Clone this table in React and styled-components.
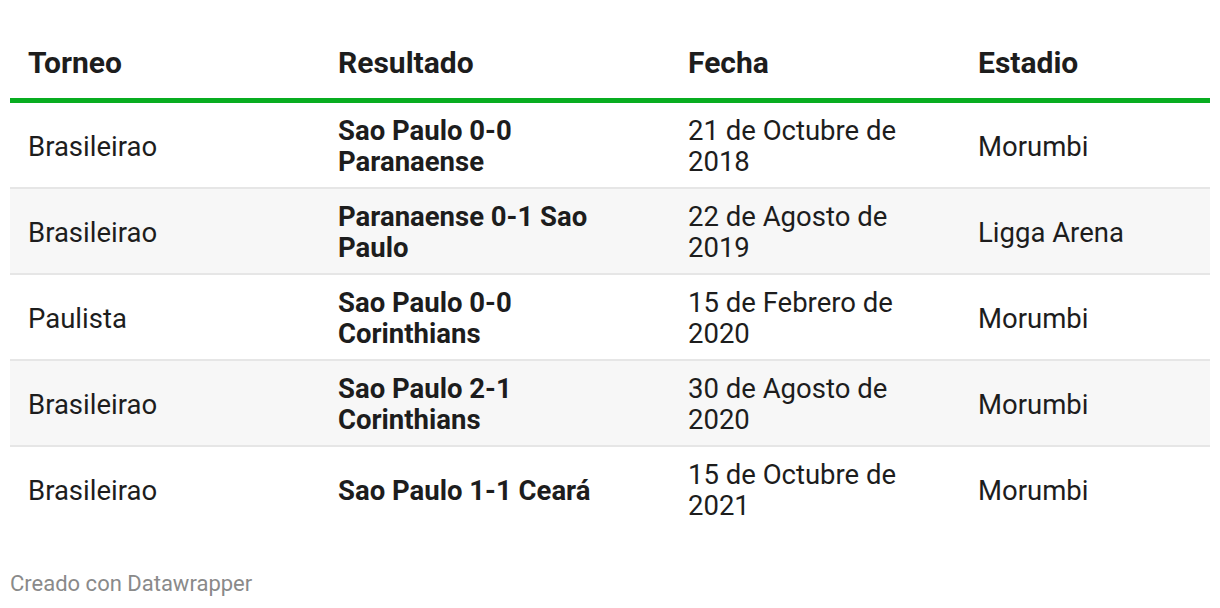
import React from "react";
import styled, { createGlobalStyle } from "styled-components";

const GlobalStyle = createGlobalStyle`
  html, body {
    margin: 0;
    padding: 0;
    background: #ffffff;
  }
  body {
    font-family: Roboto, "Liberation Sans", sans-serif;
    color: #1d1d1d;
  }
`;

const rows = [
  {
    torneo: "Brasileirao",
    resultado: "Sao Paulo 0-0 Paranaense",
    fecha: "21 de Octubre de 2018",
    estadio: "Morumbi",
  },
  {
    torneo: "Brasileirao",
    resultado: "Paranaense 0-1 Sao Paulo",
    fecha: "22 de Agosto de 2019",
    estadio: "Ligga Arena",
  },
  {
    torneo: "Paulista",
    resultado: "Sao Paulo 0-0 Corinthians",
    fecha: "15 de Febrero de 2020",
    estadio: "Morumbi",
  },
  {
    torneo: "Brasileirao",
    resultado: "Sao Paulo 2-1 Corinthians",
    fecha: "30 de Agosto de 2020",
    estadio: "Morumbi",
  },
  {
    torneo: "Brasileirao",
    resultado: "Sao Paulo 1-1 Ceará",
    fecha: "15 de Octubre de 2021",
    estadio: "Morumbi",
  },
];

export default function App() {
  return (
    <>
      <GlobalStyle />
      <Page>
        <Table>
          <HeaderRow>
            <HeadCell>Torneo</HeadCell>
            <HeadCell>Resultado</HeadCell>
            <HeadCell>Fecha</HeadCell>
            <HeadCell>Estadio</HeadCell>
          </HeaderRow>
          {rows.map((row, index) => (
            <Row key={index} $striped={index % 2 === 1} $last={index === rows.length - 1}>
              <Cell>{row.torneo}</Cell>
              <Cell $bold>{row.resultado}</Cell>
              <Cell>{row.fecha}</Cell>
              <Cell>{row.estadio}</Cell>
            </Row>
          ))}
        </Table>
        <Footer>Creado con Datawrapper</Footer>
      </Page>
    </>
  );
}

const Page = styled.div`
  padding: 44px 10px 0;
  display: flex;
  flex-direction: column;
`;

const Table = styled.div`
  display: flex;
  flex-direction: column;
`;

const columns = `310px 350px 290px 250px`;

const HeaderRow = styled.div`
  display: grid;
  grid-template-columns: ${columns};
  border-bottom: 5px solid #08ad20;
  padding-bottom: 16px;
`;

const HeadCell = styled.div`
  padding: 0 18px;
  font-size: 30px;
  font-weight: 700;
  line-height: 38px;
  color: #1d1d1d;
`;

const Row = styled.div`
  display: grid;
  grid-template-columns: ${columns};
  align-items: center;
  min-height: 62px;
  padding: 12px 0 10px;
  background: ${(p) => (p.$striped ? "#f7f7f7" : "#ffffff")};
  border-bottom: 2px solid ${(p) => (p.$last ? "transparent" : "#e6e6e6")};
`;

const Cell = styled.div`
  padding: 0 18px;
  font-size: 27.5px;
  line-height: 31px;
  font-weight: ${(p) => (p.$bold ? 700 : 400)};
  color: #1d1d1d;
`;

const Footer = styled.div`
  margin-top: 38px;
  font-size: 22px;
  line-height: 26px;
  color: #8a8a8a;
`;
